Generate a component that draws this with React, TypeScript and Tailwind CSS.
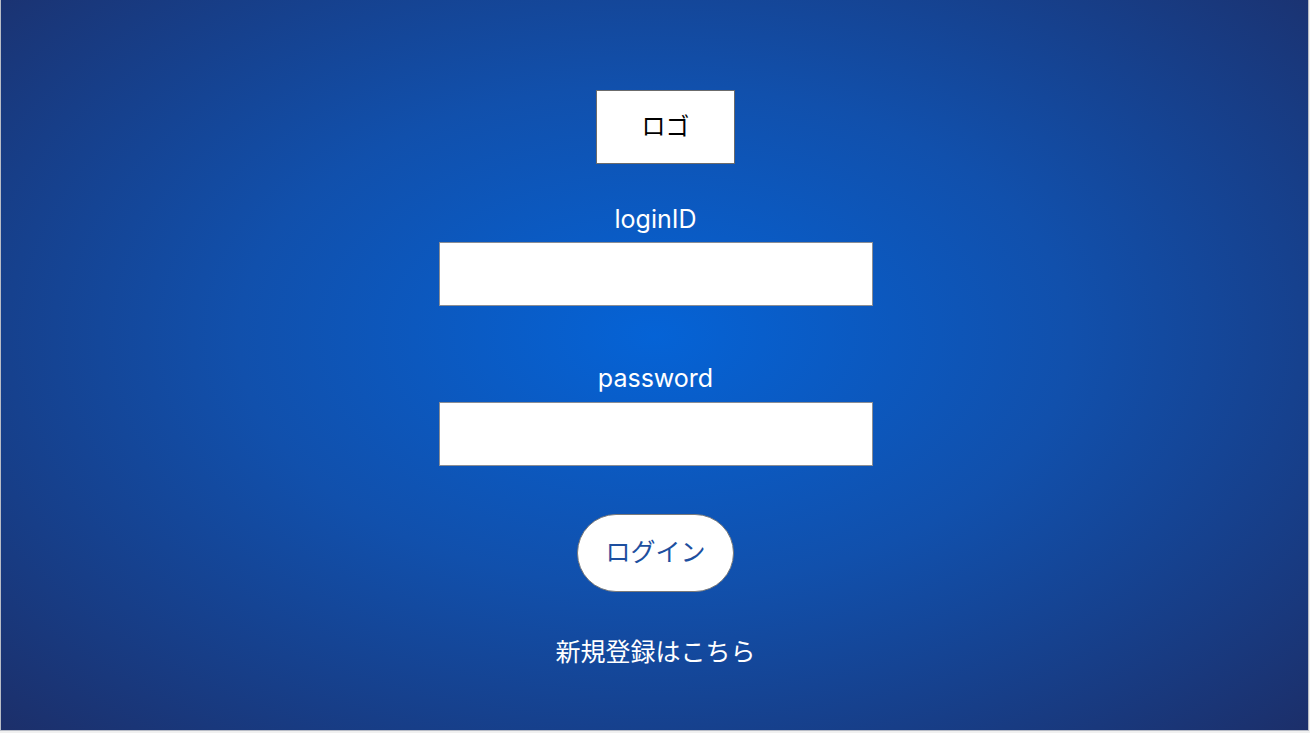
export default function App() {
  const font = { fontFamily: 'Inter, "Noto Sans CJK JP", sans-serif' };

  return (
    <div className="w-[1310px] h-[733px] bg-[#f0f0f0]" style={font}>
      <div className="w-[1309px] h-[731px] border-l border-r border-b border-[#b8bcc6] bg-[radial-gradient(ellipse_at_50%_46%,#0563d6_0%,#1150ac_45%,#1c2f6a_100%)] flex flex-col items-center pt-[90px] pl-[2px]">
        <div className="ml-[20px] w-[139px] h-[74px] bg-white border border-[#6b6b6b] flex items-center justify-center text-[24px] text-black">
          ロゴ
        </div>

        <label className="mt-[39px] h-[32px] leading-[32px] text-[25px] text-white">loginID</label>
        <input
          type="text"
          className="mt-[7px] w-[434px] h-[64px] bg-white border border-[#8a8d94] outline-none px-3 text-[20px]"
        />

        <label className="mt-[56px] h-[32px] leading-[32px] text-[25px] text-white">password</label>
        <input
          type="password"
          className="mt-[8px] w-[434px] h-[64px] bg-white border border-[#8a8d94] outline-none px-3 text-[20px]"
        />

        <button className="mt-[48px] w-[157px] h-[78px] rounded-full bg-white border border-[#7a7a7a] text-[25px] text-[#1d4f9f]">
          ログイン
        </button>

        <a className="mt-[44px] h-[32px] leading-[32px] text-[25px] text-white cursor-pointer">新規登録はこちら</a>
      </div>
    </div>
  );
}
